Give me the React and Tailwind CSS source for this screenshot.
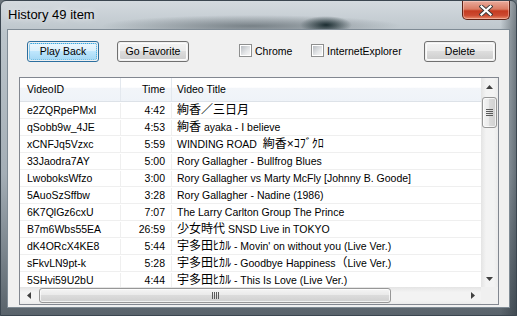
import React from "react";

const rows = [
  ["e2ZQRpePMxI", "4:42", "絢香／三日月"],
  ["qSobb9w_4JE", "4:53", "絢香 ayaka - I believe"],
  ["xCNFJq5Vzxc", "5:59", "WINDING ROAD  絢香×ｺﾌﾞｸﾛ"],
  ["33Jaodra7AY", "5:00", "Rory Gallagher - Bullfrog Blues"],
  ["LwoboksWfzo", "3:00", "Rory Gallagher vs Marty McFly [Johnny B. Goode]"],
  ["5AuoSzSffbw", "3:28", "Rory Gallagher - Nadine (1986)"],
  ["6K7QlGz6cxU", "7:07", "The Larry Carlton Group The Prince"],
  ["B7m6Wbs55EA", "26:59", "少女時代 SNSD Live in TOKYO"],
  ["dK4ORcX4KE8", "5:44", "宇多田ﾋｶﾙ - Movin' on without you (Live Ver.)"],
  ["sFkvLN9pt-k", "5:28", "宇多田ﾋｶﾙ - Goodbye Happiness（Live Ver.)"],
  ["5SHvi59U2bU", "4:44", "宇多田ﾋｶﾙ - This Is Love (Live Ver.)"],
];

// japanese runs are drawn a bit bigger, like the system font does
const Mixed = ({ text }) =>
  text.split(/([\u3000-\u9fff\uff00-\uffef×]+)/).map((part, i) =>
    i % 2 ? (
      <span key={i} className="text-[12px]">
        {part}
      </span>
    ) : (
      part
    )
  );

const Button = ({ children, primary, className = "" }) => (
  <div
    className={`h-[21px] w-[72px] rounded-[3px] border p-px ${
      primary ? "border-[#2c6f9f]" : "border-[#707070]"
    } ${className}`}
  >
    <div
      className={`flex h-full items-center justify-center rounded-[2px] ${
        primary
          ? "border border-dotted border-[#3aa6dc] bg-[linear-gradient(to_bottom,#eaf6fd_0%,#d9f0fc_50%,#bee6fd_50%,#a7d9f5_100%)]"
          : "border border-[#fbfbfb] bg-[linear-gradient(to_bottom,#f2f2f2_0%,#ebebeb_50%,#dddddd_50%,#cfcfcf_100%)]"
      }`}
    >
      {children}
    </div>
  </div>
);

const Check = ({ label, className = "" }) => (
  <div className={`flex items-center gap-[3px] ${className}`}>
    <div className="-mt-[3px] h-[13px] w-[13px] border border-[#8e8f8f] bg-white p-px">
      <div className="h-full w-full bg-[linear-gradient(135deg,#b9bdc2,#e4e6e8_60%,#f6f6f6)]" />
    </div>
    <span>{label}</span>
  </div>
);

const Arrow = ({ dir }) => {
  const pts = {
    up: "0,4 3.5,0 7,4",
    down: "0,0 7,0 3.5,4",
    left: "4,0 4,7 0,3.5",
    right: "0,0 4,3.5 0,7",
  }[dir];
  const vert = dir === "up" || dir === "down";
  return (
    <svg width={vert ? 7 : 4} height={vert ? 4 : 7} viewBox={vert ? "0 0 7 4" : "0 0 4 7"}>
      <polygon points={pts} fill="#404040" />
    </svg>
  );
};

const App = () => {
  return (
    <div className="h-[316px] w-[517px] bg-[#6c767e] font-['Liberation_Sans','Noto_Sans_CJK_JP',sans-serif] text-[10.5px] text-black">
      <div className="flex h-[316px] w-[517px] flex-col overflow-hidden rounded-t-[6px] border border-[#3b4650] bg-[radial-gradient(ellipse_26px_9px_at_325px_24px,rgba(20,38,42,0.95),transparent),radial-gradient(ellipse_150px_11px_at_250px_25px,rgba(60,70,76,0.55),transparent),linear-gradient(to_right,transparent_97%,rgba(40,50,58,0.5)),linear-gradient(to_bottom,#d4dadf,#bcc5cb_10%,#a4aeb6_55%,#59636b)]">
        {/* title bar */}
        <div className="flex h-[28px] shrink-0">
          <div className="pl-[7px] pt-[6px] text-[13px] leading-[16px] [text-shadow:0_0_6px_rgba(255,255,255,0.95)]">
            History 49 item
          </div>
          <div className="ml-auto mr-[6px] flex h-[19px] w-[48px] items-center justify-center rounded-b-[5px] border border-t-0 border-[#5e2216] bg-[linear-gradient(to_bottom,#e9ab9c_0%,#da7c64_45%,#c53b21_55%,#cc4a31_80%,#e98d6c_100%)] shadow-[inset_0_0_0_1px_rgba(255,220,210,0.45)]">
            <svg width="14" height="11" viewBox="0 0 14 11">
              <path d="M2.5 1.5 L11.5 9.5 M11.5 1.5 L2.5 9.5" stroke="#3a3a3a" strokeWidth="4" strokeLinecap="square" />
              <path d="M2.5 1.5 L11.5 9.5 M11.5 1.5 L2.5 9.5" stroke="#ffffff" strokeWidth="2.2" strokeLinecap="square" />
            </svg>
          </div>
        </div>

        {/* client area */}
        <div className="ml-[6px] flex h-[279px] w-[503px] flex-col border border-[#7f8b95] bg-[#f0f0f0]">
          <div className="flex items-center pl-[19px] pr-[13px] pt-[11px]">
            <Button primary>Play Back</Button>
            <Button className="ml-[18px]">Go Favorite</Button>
            <Check label="Chrome" className="ml-[50px] w-[72px]" />
            <Check label="InternetExplorer" />
            <Button className="ml-auto">Delete</Button>
          </div>

          {/* list view */}
          <div className="ml-[11px] mt-[15px] flex h-[228px] w-[480px] flex-col border border-[#828790] bg-white">
            <div className="flex min-h-0 flex-1">
              <div className="flex-1 overflow-hidden">
                <div className="flex h-[24px] items-center border-b border-[#dde2e8] bg-[linear-gradient(to_bottom,#ffffff_0%,#ffffff_40%,#f2f5f9_45%,#eff3f8_100%)]">
                  <div className="flex h-full w-[101px] items-center border-r border-[#e3e8ee] pl-[7px]">VideoID</div>
                  <div className="flex h-full w-[51px] items-center justify-end border-r border-[#e3e8ee] pr-[6px]">Time</div>
                  <div className="pl-[5px]">Video Title</div>
                </div>
                {rows.map(([id, time, title]) => (
                  <div key={id} className="flex h-[17px] items-center border-b border-[#efefef] pt-px leading-[13px]">
                    <div className="flex h-full w-[101px] items-center border-r border-[#efefef] pl-[7px]">{id}</div>
                    <div className="flex h-full w-[51px] items-center justify-end border-r border-[#efefef] pr-[6px]">{time}</div>
                    <div className="whitespace-pre pl-[5px]">
                      <Mixed text={title} />
                    </div>
                  </div>
                ))}
              </div>

              {/* vertical scrollbar */}
              <div className="flex w-[17px] flex-col bg-[linear-gradient(to_right,#e4e4e4,#f3f3f3_30%,#f3f3f3_75%,#ebebeb)]">
                <div className="flex h-[17px] items-center justify-center">
                  <Arrow dir="up" />
                </div>
                <div className="ml-px mt-[2px] flex h-[31px] w-[15px] flex-col items-center justify-center gap-px rounded-[3px] border border-[#979797] bg-[linear-gradient(to_right,#f4f4f4,#e9e9e9_50%,#dbdbdb_50%,#d0d0d0)] shadow-[inset_0_0_0_1px_rgba(255,255,255,0.7)]">
                  <div className="h-px w-[7px] bg-[#5a5a5a]" />
                  <div className="h-px w-[7px] bg-[#5a5a5a]" />
                  <div className="h-px w-[7px] bg-[#5a5a5a]" />
                  <div className="h-px w-[7px] bg-[#5a5a5a]" />
                </div>
                <div className="flex-1" />
                <div className="flex h-[17px] items-center justify-center">
                  <Arrow dir="down" />
                </div>
              </div>
            </div>

            {/* horizontal scrollbar */}
            <div className="flex h-[17px]">
              <div className="flex flex-1 items-center bg-[linear-gradient(to_bottom,#e4e4e4,#f3f3f3_30%,#f3f3f3_75%,#ebebeb)]">
                <div className="flex h-full w-[17px] items-center justify-center">
                  <Arrow dir="left" />
                </div>
                <div className="ml-[2px] flex h-[15px] w-[352px] items-center justify-center gap-px rounded-[3px] border border-[#979797] bg-[linear-gradient(to_bottom,#f4f4f4,#e9e9e9_50%,#dbdbdb_50%,#d0d0d0)] shadow-[inset_0_0_0_1px_rgba(255,255,255,0.7)]">
                  <div className="h-[7px] w-px bg-[#5a5a5a]" />
                  <div className="h-[7px] w-px bg-[#5a5a5a]" />
                  <div className="h-[7px] w-px bg-[#5a5a5a]" />
                  <div className="h-[7px] w-px bg-[#5a5a5a]" />
                </div>
                <div className="flex-1" />
                <div className="flex h-full w-[17px] items-center justify-center">
                  <Arrow dir="right" />
                </div>
              </div>
              <div className="w-[17px] bg-[#f0f0f0]" />
            </div>
          </div>
        </div>
      </div>
    </div>
  );
};

export default App;
